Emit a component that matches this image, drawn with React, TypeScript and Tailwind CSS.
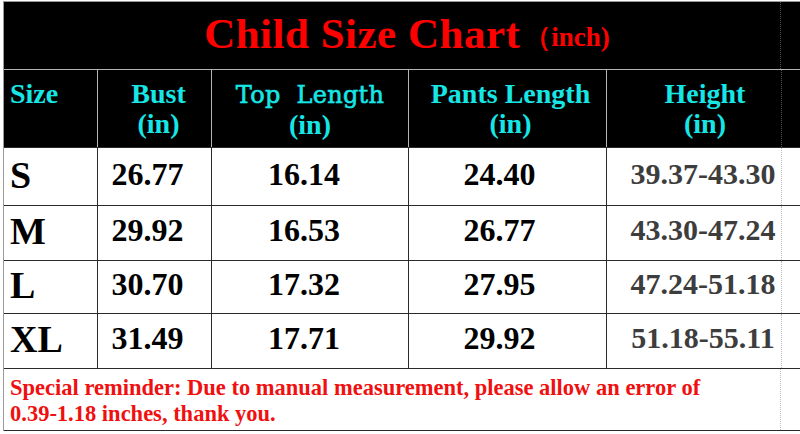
const rows = [
  { size: "S", bust: "26.77", top: "16.14", pants: "24.40", height: "39.37-43.30", h: "h-[58px]" },
  { size: "M", bust: "29.92", top: "16.53", pants: "26.77", height: "43.30-47.24", h: "h-[55px]" },
  { size: "L", bust: "30.70", top: "17.32", pants: "27.95", height: "47.24-51.18", h: "h-[53px]" },
  { size: "XL", bust: "31.49", top: "17.71", pants: "29.92", height: "51.18-55.11", h: "h-[55px]" },
];

export default function App() {
  return (
    <div className="w-[800px] h-[434px] overflow-hidden bg-white pt-[1px] pl-[3px] font-['Liberation_Serif',serif] font-bold">
      <div className="border-l border-[#9a9a9a]">
        {/* Title band */}
        <div className="flex h-[68px] bg-black border-t border-[#9a9a9a]">
          <div className="w-[776px] flex items-center justify-center pb-[4px] pl-[30px]">
            <span className="text-[43px] tracking-[0.5px] text-[#ff0000] leading-none">Child Size Chart</span>
            <span className="ml-[4px] mt-[8px] text-[27px] text-[#ff0000] leading-none">（inch)</span>
          </div>
          <div className="flex-1 border-l border-dotted border-[#555]" />
        </div>

        {/* Header */}
        <div className="flex h-[78px] bg-black border-t border-[#b5b5b5] text-[28px] leading-[30px] text-[#17e6e6]">
          <div className="w-[94px] border-r border-[#b5b5b5] pl-[6px] pt-[9px]">Size</div>
          <div className="w-[114px] border-r border-[#b5b5b5] pt-[9px] pl-[8px] text-center">
            Bust
            <br />
            (in)
          </div>
          <div className="w-[197px] border-r border-[#b5b5b5] pt-[9px] text-center">
            <span className="font-['DejaVu_Serif',serif] font-normal text-[24px] tracking-[0.3px] [-webkit-text-stroke:0.6px_#17e6e6]">
              Top&nbsp; Length
            </span>
            <br />
            (in)
          </div>
          <div className="w-[198px] border-r border-[#b5b5b5] pt-[9px] pl-[6px] text-center">
            Pants Length
            <br />
            (in)
          </div>
          <div className="w-[174px] pt-[9px] pl-[22px] text-center">
            Height
            <br />
            (in)
          </div>
          <div className="flex-1 border-l border-dotted border-[#555]" />
        </div>

        {/* Data rows */}
        {rows.map((r) => (
          <div key={r.size} className={`flex ${r.h} border-t border-[#2a2a2a] text-black`}>
            <div className="w-[94px] border-r border-[#2a2a2a] pl-[6px] flex items-center pb-[4px] text-[38px] leading-none">
              {r.size}
            </div>
            <div className="w-[114px] border-r border-[#2a2a2a] flex items-center justify-center pr-[14px] pb-[6px] text-[32px] leading-none">
              {r.bust}
            </div>
            <div className="w-[197px] border-r border-[#2a2a2a] flex items-center justify-center pr-[12px] pb-[6px] text-[32px] leading-none">
              {r.top}
            </div>
            <div className="w-[198px] border-r border-[#2a2a2a] flex items-center justify-center pr-[16px] pb-[6px] text-[32px] leading-none">
              {r.pants}
            </div>
            <div className="w-[174px] flex items-center justify-center pl-[18px] pb-[6px] text-[30px] leading-none text-[#3d3d3d]">
              {r.height}
            </div>
            <div className="flex-1 border-l border-dotted border-[#bdbdbd]" />
          </div>
        ))}

        {/* Footer */}
        <div className="flex h-[63px] border-t border-b border-[#2a2a2a]">
          <div className="w-[776px] pl-[6px] pt-[6px] text-[22.5px] leading-[26px] text-[#f01010]">
            Special reminder: Due to manual measurement, please allow an error of
            <br />
            0.39-1.18 inches, thank you.
          </div>
          <div className="flex-1 border-l border-dotted border-[#bdbdbd]" />
        </div>
      </div>
    </div>
  );
}
